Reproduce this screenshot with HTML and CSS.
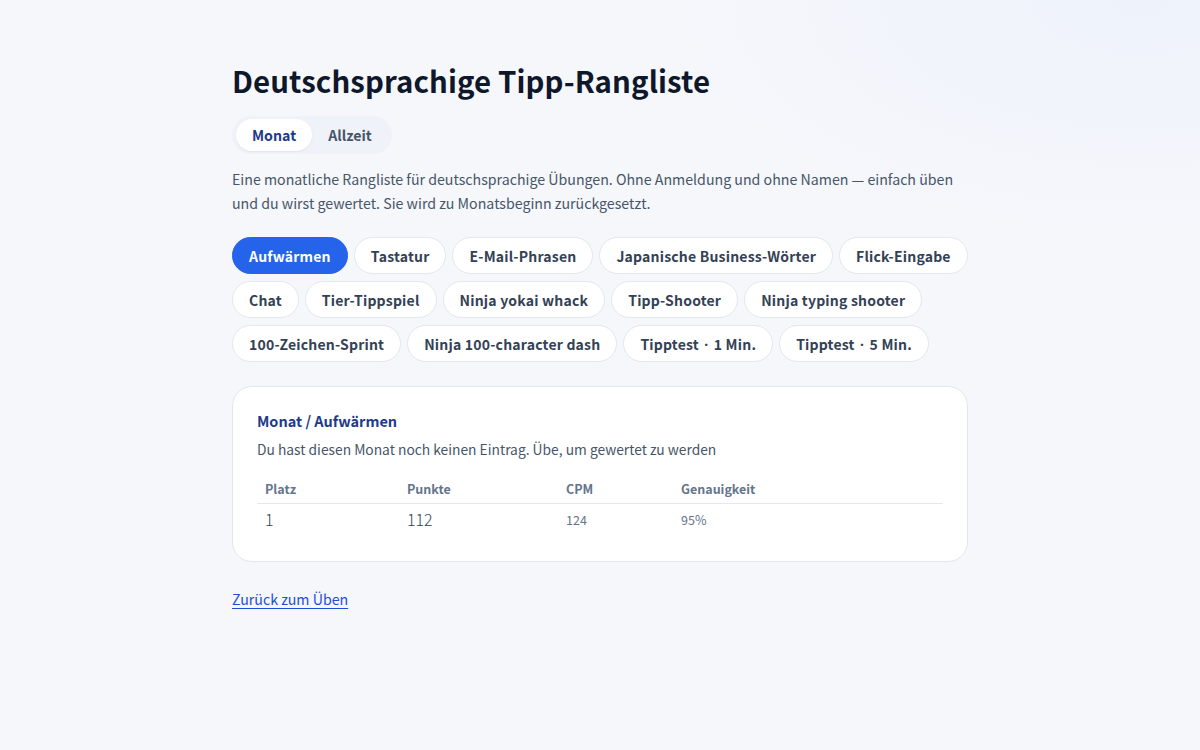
FILE: index.html
```html
<!DOCTYPE html>
<html lang="de">
<head>
<meta charset="utf-8">
<title>Deutschsprachige Tipp-Rangliste</title>
<link rel="stylesheet" href="styles.css">
</head>
<body>
<main class="page">
  <h1 class="title">Deutschsprachige Tipp-Rangliste</h1>
  <div class="tabs">
    <button class="tab active">Monat</button>
    <button class="tab">Allzeit</button>
  </div>
  <p class="intro">Eine monatliche Rangliste für deutschsprachige Übungen. Ohne Anmeldung und ohne Namen — einfach üben und du wirst gewertet. Sie wird zu Monatsbeginn zurückgesetzt.</p>
  <div class="chips">
    <button class="chip active">Aufwärmen</button>
    <button class="chip">Tastatur</button>
    <button class="chip">E-Mail-Phrasen</button>
    <button class="chip">Japanische Business-Wörter</button>
    <button class="chip">Flick-Eingabe</button>
    <button class="chip">Chat</button>
    <button class="chip">Tier-Tippspiel</button>
    <button class="chip">Ninja yokai whack</button>
    <button class="chip">Tipp-Shooter</button>
    <button class="chip">Ninja typing shooter</button>
    <button class="chip">100-Zeichen-Sprint</button>
    <button class="chip">Ninja 100-character dash</button>
    <button class="chip">Tipptest <span class="dot">·</span> 1 Min.</button>
    <button class="chip">Tipptest <span class="dot">·</span> 5 Min.</button>
  </div>
  <section class="card">
    <h2 class="card-title">Monat / Aufwärmen</h2>
    <p class="card-note">Du hast diesen Monat noch keinen Eintrag. Übe, um gewertet zu werden</p>
    <table class="board">
      <thead>
        <tr><th class="c1">Platz</th><th class="c2">Punkte</th><th class="c3">CPM</th><th class="c4">Genauigkeit</th></tr>
      </thead>
      <tbody>
        <tr><td class="big">1</td><td class="big">112</td><td class="small">124</td><td class="small">95%</td></tr>
      </tbody>
    </table>
  </section>
  <a class="back" href="#">Zurück zum Üben</a>
</main>
</body>
</html>
```
FILE: styles.css
```css
* { box-sizing: border-box; }
html, body { margin: 0; height: 100%; }
body {
  font-family: "Noto Sans CJK JP", "Noto Sans", sans-serif;
  background: radial-gradient(ellipse 500px 250px at 95% 0%, #eef2fa 0%, rgba(238,242,250,0) 100%), #f5f7fb;
  color: #0f172a;
}
.page {
  width: 736px;
  margin: 0 auto;
  padding-top: 58px;
}
.title {
  margin: 0;
  font-size: 29.4px;
  font-weight: 700;
  line-height: 44px;
  color: #0f172a;
  letter-spacing: 0.1px;
}
.tabs {
  display: inline-flex;
  margin-top: 14px;
  padding: 3px 4px;
  background: #eff2f8;
  border-radius: 999px;
}
.tab {
  font: inherit;
  font-size: 14.2px;
  font-weight: 700;
  border: 0;
  background: transparent;
  color: #475569;
  padding: 0 16px;
  height: 32px;
  border-radius: 999px;
}
.tab.active {
  background: #ffffff;
  color: #1e3a8a;
  box-shadow: 0 1px 2px rgba(15,23,42,0.06);
}
.intro {
  margin: 13px 0 0;
  font-size: 14.2px;
  line-height: 24px;
  color: #475569;
}
.chips {
  display: flex;
  flex-wrap: wrap;
  gap: 7px 6px;
  margin-top: 22px;
}
.chip {
  font: inherit;
  font-size: 14px;
  font-weight: 700;
  letter-spacing: 0.2px;
  height: 37px;
  padding: 0 16px;
  border-radius: 999px;
  border: 1px solid #e2e8f0;
  background: #ffffff;
  color: #334155;
}
.chip .dot { font-family: "Noto Sans", sans-serif; margin: 0 2px; }
.chip.active {
  background: #2563eb;
  border-color: #2563eb;
  color: #ffffff;
}
.card {
  margin-top: 24px;
  background: #ffffff;
  border: 1px solid #e2e8f0;
  border-radius: 20px;
  padding: 22px 24px 24px;
}
.card-title {
  margin: 0;
  font-size: 14.5px;
  font-weight: 700;
  line-height: 24px;
  color: #1e3a8a;
}
.card-note {
  margin: 4px 0 0;
  font-size: 13.8px;
  line-height: 24px;
  color: #475569;
}
.board {
  width: 100%;
  border-collapse: collapse;
  margin-top: 14px;
}
.board th {
  text-align: left;
  font-size: 12.5px;
  font-weight: 700;
  color: #64748b;
  padding: 4px 8px 5px;
  border-bottom: 1px solid #e2e8f0;
}
.c1 { width: 142px; }
.c2 { width: 159px; }
.c3 { width: 115px; }
.board td {
  padding: 3px 8px 6px;
  text-align: left;
}
.board td.big { font-size: 16px; font-weight: 300; color: #334155; }
.board td.small { font-size: 12.5px; color: #64748b; }
.back {
  display: inline-block;
  margin-top: 27px;
  font-size: 14.2px;
  color: #1d4ed8;
  text-decoration: underline;
  text-underline-offset: 3px;
}
```
